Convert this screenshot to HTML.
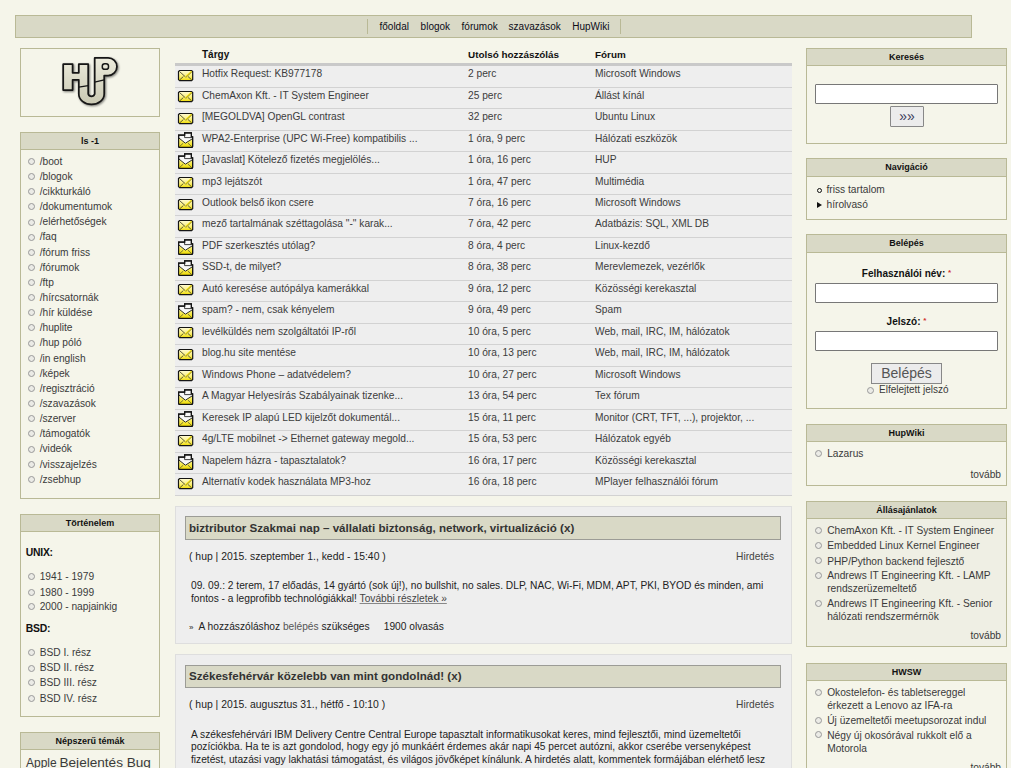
<!DOCTYPE html><html lang="hu"><head><meta charset="utf-8"><title>HUP</title><style>
*{margin:0;padding:0;box-sizing:border-box}
html{background:#fff}
body{width:1011px;height:768px;background:#f5f5ea;position:relative;overflow:hidden;font-family:"Liberation Sans",sans-serif;font-size:10px;color:#333}
.abs{position:absolute}
#nav{left:15px;top:15px;width:957px;height:23px;background:#d9d9c6;border:1px solid #b9b996}
#nav .sep{position:absolute;top:2.6px;width:1px;height:15.4px;background:#b9b996}
#nav span.t{position:absolute;top:5px;color:#0c0c18;font-size:10px;white-space:nowrap}
.blk{position:absolute;border:1px solid #b9b996;background:#f5f5ea}
.blk .hd{height:17px;background:#d9d9c6;border-bottom:1px solid #b9b996;text-align:center;font-weight:bold;font-size:9px;color:#111;line-height:16px}
ul.li{list-style:none}
ul.li li{position:relative;white-space:nowrap;color:#444}
.circ{position:absolute;width:7px;height:7px;border:1px solid #999;border-radius:50%;background:#ebebe6}
table.tr{position:absolute;left:175px;top:45px;width:617px;border-collapse:collapse}
.row{position:absolute;left:175px;width:617px;height:21.47px;background:#eeeeee;border-bottom:1px solid #d2d2d2}
.row span{position:absolute;top:2px;white-space:nowrap;color:#3c3c3c;font-size:10.2px}
.ico{position:absolute;left:3px}
.art{position:absolute;left:175px;width:617px;background:#eeeeee;border:1px solid #dedede}
.art .ttl{position:absolute;left:9px;width:596px;height:23px;background:#d9d9c6;border:1px solid #9c9c96;font-weight:bold;font-size:11.6px;color:#333;padding-left:3px;line-height:20px;white-space:nowrap}
.art .meta{position:absolute;left:13px;font-size:10.4px;color:#222;white-space:nowrap}
.art .hird{position:absolute;right:17px;font-size:10.2px;color:#444}
.art .body{position:absolute;left:15px;width:585px;font-size:10.2px;line-height:12.8px;color:#222}
.art .foot{position:absolute;left:13px;font-size:10.2px;color:#222;white-space:nowrap}
input.tx{position:absolute;left:8px;width:183px;height:20px;background:#fff;border:1px solid #777;border-radius:1px}
</style></head><body><div id="nav" class="abs">
<div class="sep" style="left:350.5px"></div><div class="sep" style="left:603.5px"></div>
<span class="t" style="left:363.5px">főoldal</span>
<span class="t" style="left:404.6px">blogok</span>
<span class="t" style="left:445.6px">fórumok</span>
<span class="t" style="left:492.6px">szavazások</span>
<span class="t" style="left:556.2px">HupWiki</span>
</div>
<div class="blk" style="left:20px;top:48px;width:140px;height:69px">
<svg style="position:absolute;left:34px;top:1px" width="70" height="60" viewBox="0 0 70 60">
<defs><linearGradient id="lg" x1="0" y1="0" x2="0" y2="1"><stop offset="0" stop-color="#ecebdc"/><stop offset="1" stop-color="#c9c8b2"/></linearGradient>
<filter id="sh" x="-20%" y="-20%" width="140%" height="140%"><feGaussianBlur in="SourceAlpha" stdDeviation="1"/><feOffset dx="0.5" dy="0.5"/><feComponentTransfer><feFuncA type="linear" slope="0.5"/></feComponentTransfer><feMerge><feMergeNode/><feMergeNode in="SourceGraphic"/></feMerge></filter></defs>
<g filter="url(#sh)" transform="translate(0.4,0.5)">
<path d="M7.8 13.7H17.2V22.3H23.4V13.7H32.8V43.4A3.4 3.4 0 0 0 39.3 43.4V7.4H52.7A8.8 8.8 0 0 1 52.7 25H48.8V43.4A12.7 10.5 0 0 1 23.4 43.4V29.3H17.2V39.5H7.8Z" fill="url(#lg)" stroke="#161616" stroke-width="1.75" stroke-linejoin="round"/>
<rect x="46.9" y="13.2" width="6.2" height="5.6" rx="2.4" fill="#e6e5d6" stroke="#161616" stroke-width="1.5"/>
<path d="M23.4 36.7L32.8 35.2M39.3 31.6L48.8 29.3" stroke="#161616" stroke-width="1.2"/>
</g></svg>
</div>
<div class="blk" style="left:20px;top:132px;width:140px;height:367px"><div class="hd">ls -1</div>
<div class="circ" style="left:7px;top:24.95px"></div><span class="abs" style="left:18.7px;top:22.75px;font-size:10.2px;color:#3a3a3a;white-space:nowrap">/boot</span>
<div class="circ" style="left:7px;top:40.09px"></div><span class="abs" style="left:18.7px;top:37.89px;font-size:10.2px;color:#3a3a3a;white-space:nowrap">/blogok</span>
<div class="circ" style="left:7px;top:55.23px"></div><span class="abs" style="left:18.7px;top:53.03px;font-size:10.2px;color:#3a3a3a;white-space:nowrap">/cikkturkáló</span>
<div class="circ" style="left:7px;top:70.37px"></div><span class="abs" style="left:18.7px;top:68.17px;font-size:10.2px;color:#3a3a3a;white-space:nowrap">/dokumentumok</span>
<div class="circ" style="left:7px;top:85.51px"></div><span class="abs" style="left:18.7px;top:83.31px;font-size:10.2px;color:#3a3a3a;white-space:nowrap">/elérhetőségek</span>
<div class="circ" style="left:7px;top:100.65px"></div><span class="abs" style="left:18.7px;top:98.45px;font-size:10.2px;color:#3a3a3a;white-space:nowrap">/faq</span>
<div class="circ" style="left:7px;top:115.79px"></div><span class="abs" style="left:18.7px;top:113.59px;font-size:10.2px;color:#3a3a3a;white-space:nowrap">/fórum friss</span>
<div class="circ" style="left:7px;top:130.93px"></div><span class="abs" style="left:18.7px;top:128.73px;font-size:10.2px;color:#3a3a3a;white-space:nowrap">/fórumok</span>
<div class="circ" style="left:7px;top:146.07px"></div><span class="abs" style="left:18.7px;top:143.87px;font-size:10.2px;color:#3a3a3a;white-space:nowrap">/ftp</span>
<div class="circ" style="left:7px;top:161.21px"></div><span class="abs" style="left:18.7px;top:159.01px;font-size:10.2px;color:#3a3a3a;white-space:nowrap">/hírcsatornák</span>
<div class="circ" style="left:7px;top:176.35px"></div><span class="abs" style="left:18.7px;top:174.15px;font-size:10.2px;color:#3a3a3a;white-space:nowrap">/hír küldése</span>
<div class="circ" style="left:7px;top:191.49px"></div><span class="abs" style="left:18.7px;top:189.29px;font-size:10.2px;color:#3a3a3a;white-space:nowrap">/huplite</span>
<div class="circ" style="left:7px;top:206.63px"></div><span class="abs" style="left:18.7px;top:204.43px;font-size:10.2px;color:#3a3a3a;white-space:nowrap">/hup póló</span>
<div class="circ" style="left:7px;top:221.77px"></div><span class="abs" style="left:18.7px;top:219.57px;font-size:10.2px;color:#3a3a3a;white-space:nowrap">/in english</span>
<div class="circ" style="left:7px;top:236.91px"></div><span class="abs" style="left:18.7px;top:234.71px;font-size:10.2px;color:#3a3a3a;white-space:nowrap">/képek</span>
<div class="circ" style="left:7px;top:252.05px"></div><span class="abs" style="left:18.7px;top:249.85px;font-size:10.2px;color:#3a3a3a;white-space:nowrap">/regisztráció</span>
<div class="circ" style="left:7px;top:267.19px"></div><span class="abs" style="left:18.7px;top:264.99px;font-size:10.2px;color:#3a3a3a;white-space:nowrap">/szavazások</span>
<div class="circ" style="left:7px;top:282.33px"></div><span class="abs" style="left:18.7px;top:280.13px;font-size:10.2px;color:#3a3a3a;white-space:nowrap">/szerver</span>
<div class="circ" style="left:7px;top:297.47px"></div><span class="abs" style="left:18.7px;top:295.27px;font-size:10.2px;color:#3a3a3a;white-space:nowrap">/támogatók</span>
<div class="circ" style="left:7px;top:312.61px"></div><span class="abs" style="left:18.7px;top:310.41px;font-size:10.2px;color:#3a3a3a;white-space:nowrap">/videók</span>
<div class="circ" style="left:7px;top:327.75px"></div><span class="abs" style="left:18.7px;top:325.55px;font-size:10.2px;color:#3a3a3a;white-space:nowrap">/visszajelzés</span>
<div class="circ" style="left:7px;top:342.89px"></div><span class="abs" style="left:18.7px;top:340.69px;font-size:10.2px;color:#3a3a3a;white-space:nowrap">/zsebhup</span>
</div>
<div class="blk" style="left:20px;top:514px;width:140px;height:203px"><div class="hd">Történelem</div>
<span class="abs" style="left:4.8px;top:32.10px;font-size:10.4px;letter-spacing:-0.25px;font-weight:bold;color:#111">UNIX:</span>
<div class="circ" style="left:7px;top:58.30px"></div><span class="abs" style="left:18.7px;top:56.10px;font-size:10.2px;color:#3a3a3a;white-space:nowrap">1941 - 1979</span>
<div class="circ" style="left:7px;top:73.80px"></div><span class="abs" style="left:18.7px;top:71.60px;font-size:10.2px;color:#3a3a3a;white-space:nowrap">1980 - 1999</span>
<div class="circ" style="left:7px;top:88.30px"></div><span class="abs" style="left:18.7px;top:86.10px;font-size:10.2px;color:#3a3a3a;white-space:nowrap">2000 - napjainkig</span>
<span class="abs" style="left:4.8px;top:108.10px;font-size:10.4px;letter-spacing:-0.25px;font-weight:bold;color:#111">BSD:</span>
<div class="circ" style="left:7px;top:134.00px"></div><span class="abs" style="left:18.7px;top:131.80px;font-size:10.2px;color:#3a3a3a;white-space:nowrap">BSD I. rész</span>
<div class="circ" style="left:7px;top:149.50px"></div><span class="abs" style="left:18.7px;top:147.30px;font-size:10.2px;color:#3a3a3a;white-space:nowrap">BSD II. rész</span>
<div class="circ" style="left:7px;top:164.20px"></div><span class="abs" style="left:18.7px;top:162.00px;font-size:10.2px;color:#3a3a3a;white-space:nowrap">BSD III. rész</span>
<div class="circ" style="left:7px;top:180.00px"></div><span class="abs" style="left:18.7px;top:177.80px;font-size:10.2px;color:#3a3a3a;white-space:nowrap">BSD IV. rész</span>
</div>
<div class="blk" style="left:20px;top:732px;width:140px;height:60px"><div class="hd">Népszerű témák</div>
<span class="abs" style="left:5px;top:21.5px;white-space:nowrap;color:#3a3a3a"><span style="font-size:12px">Apple</span> <span style="font-size:13.6px">Bejelentés Bug</span></span>
</div>
<span class="abs" style="left:202px;top:49px;font-weight:bold;font-size:10px;color:#111">Tárgy</span>
<span class="abs" style="left:468px;top:49px;font-weight:bold;font-size:9.9px;color:#111">Utolsó hozzászólás</span>
<span class="abs" style="left:595px;top:49px;font-weight:bold;font-size:9.9px;color:#111">Fórum</span>
<div class="abs" style="left:175px;top:63px;width:617px;height:3px;background:#c9c9c9"></div>
<svg width="0" height="0" style="position:absolute"><defs><linearGradient id="gy" x1="0" y1="0" x2="0" y2="1"><stop offset="0" stop-color="#fffbd8"/><stop offset="0.55" stop-color="#fbf07a"/><stop offset="1" stop-color="#f0dc00"/></linearGradient><linearGradient id="gy2" x1="0" y1="0" x2="0" y2="1"><stop offset="0" stop-color="#fbf6a0"/><stop offset="1" stop-color="#f0dc00"/></linearGradient></defs></svg>
<div class="row" style="top:66.20px"><svg class="ico" style="top:2.6px;left:2px" width="17" height="14" viewBox="0 0 17 14"><path d="M2.6 1.5H14.6L15.7 2.6V10.6L14.6 11.7H2.6L1.5 10.6V2.6Z" fill="url(#gy)" stroke="#141414" stroke-width="1.2"/><path d="M2.6 2.6L8.6 8" stroke="#4a4a30" stroke-width="0.9"/><path d="M8.6 8L14.6 2.4" stroke="#f2df10" stroke-width="1.5"/><path d="M8.9 8.4L14.8 3" stroke="#4a4a30" stroke-width="0.5"/><path d="M2.8 10.8L6.4 7.5M14.6 10.8L11 7.5" stroke="#4a4a30" stroke-width="0.9"/></svg><span style="left:27px">Hotfix Request: KB977178</span><span style="left:293px">2 perc</span><span style="left:420px">Microsoft Windows</span></div>
<div class="row" style="top:87.67px"><svg class="ico" style="top:2.6px;left:2px" width="17" height="14" viewBox="0 0 17 14"><path d="M2.6 1.5H14.6L15.7 2.6V10.6L14.6 11.7H2.6L1.5 10.6V2.6Z" fill="url(#gy)" stroke="#141414" stroke-width="1.2"/><path d="M2.6 2.6L8.6 8" stroke="#4a4a30" stroke-width="0.9"/><path d="M8.6 8L14.6 2.4" stroke="#f2df10" stroke-width="1.5"/><path d="M8.9 8.4L14.8 3" stroke="#4a4a30" stroke-width="0.5"/><path d="M2.8 10.8L6.4 7.5M14.6 10.8L11 7.5" stroke="#4a4a30" stroke-width="0.9"/></svg><span style="left:27px">ChemAxon Kft. - IT System Engineer</span><span style="left:293px">25 perc</span><span style="left:420px">Állást kínál</span></div>
<div class="row" style="top:109.14px"><svg class="ico" style="top:2.6px;left:2px" width="17" height="14" viewBox="0 0 17 14"><path d="M2.6 1.5H14.6L15.7 2.6V10.6L14.6 11.7H2.6L1.5 10.6V2.6Z" fill="url(#gy)" stroke="#141414" stroke-width="1.2"/><path d="M2.6 2.6L8.6 8" stroke="#4a4a30" stroke-width="0.9"/><path d="M8.6 8L14.6 2.4" stroke="#f2df10" stroke-width="1.5"/><path d="M8.9 8.4L14.8 3" stroke="#4a4a30" stroke-width="0.5"/><path d="M2.8 10.8L6.4 7.5M14.6 10.8L11 7.5" stroke="#4a4a30" stroke-width="0.9"/></svg><span style="left:27px">[MEGOLDVA] OpenGL contrast</span><span style="left:293px">32 perc</span><span style="left:420px">Ubuntu Linux</span></div>
<div class="row" style="top:130.61px"><svg class="ico" style="top:1px;left:2px" width="18" height="17" viewBox="0 0 18 17"><path d="M1.6 3.2H7.6V0.9H14.4V4.9H15.6V14.6Q15.6 15.4 14.8 15.4H2.4Q1.6 15.4 1.6 14.6Z" fill="#f8f8f8" stroke="#141414" stroke-width="1.2"/><path d="M7.6 0.9V5.6H14.4" fill="none" stroke="#2a2a2a" stroke-width="0.9"/><path d="M1.9 6L8.4 11.2L15.3 6.8V15H1.9Z" fill="url(#gy2)"/><path d="M1.9 6L8.4 11.2L15.3 6.8" fill="none" stroke="#30302a" stroke-width="1"/><path d="M2.3 14.8L6.2 11.2M14.9 14.8L11 11.2" stroke="#55553a" stroke-width="0.8"/><path d="M1.6 3.2H7.6V0.9H14.4V4.9H15.6V14.6Q15.6 15.4 14.8 15.4H2.4Q1.6 15.4 1.6 14.6Z" fill="none" stroke="#141414" stroke-width="1.2"/></svg><span style="left:27px">WPA2-Enterprise (UPC Wi-Free) kompatibilis ...</span><span style="left:293px">1 óra, 9 perc</span><span style="left:420px">Hálózati eszközök</span></div>
<div class="row" style="top:152.08px"><svg class="ico" style="top:1px;left:2px" width="18" height="17" viewBox="0 0 18 17"><path d="M1.6 3.2H7.6V0.9H14.4V4.9H15.6V14.6Q15.6 15.4 14.8 15.4H2.4Q1.6 15.4 1.6 14.6Z" fill="#f8f8f8" stroke="#141414" stroke-width="1.2"/><path d="M7.6 0.9V5.6H14.4" fill="none" stroke="#2a2a2a" stroke-width="0.9"/><path d="M1.9 6L8.4 11.2L15.3 6.8V15H1.9Z" fill="url(#gy2)"/><path d="M1.9 6L8.4 11.2L15.3 6.8" fill="none" stroke="#30302a" stroke-width="1"/><path d="M2.3 14.8L6.2 11.2M14.9 14.8L11 11.2" stroke="#55553a" stroke-width="0.8"/><path d="M1.6 3.2H7.6V0.9H14.4V4.9H15.6V14.6Q15.6 15.4 14.8 15.4H2.4Q1.6 15.4 1.6 14.6Z" fill="none" stroke="#141414" stroke-width="1.2"/></svg><span style="left:27px">[Javaslat] Kötelező fizetés megjelölés...</span><span style="left:293px">1 óra, 16 perc</span><span style="left:420px">HUP</span></div>
<div class="row" style="top:173.55px"><svg class="ico" style="top:2.6px;left:2px" width="17" height="14" viewBox="0 0 17 14"><path d="M2.6 1.5H14.6L15.7 2.6V10.6L14.6 11.7H2.6L1.5 10.6V2.6Z" fill="url(#gy)" stroke="#141414" stroke-width="1.2"/><path d="M2.6 2.6L8.6 8" stroke="#4a4a30" stroke-width="0.9"/><path d="M8.6 8L14.6 2.4" stroke="#f2df10" stroke-width="1.5"/><path d="M8.9 8.4L14.8 3" stroke="#4a4a30" stroke-width="0.5"/><path d="M2.8 10.8L6.4 7.5M14.6 10.8L11 7.5" stroke="#4a4a30" stroke-width="0.9"/></svg><span style="left:27px">mp3 lejátszót</span><span style="left:293px">1 óra, 47 perc</span><span style="left:420px">Multimédia</span></div>
<div class="row" style="top:195.02px"><svg class="ico" style="top:2.6px;left:2px" width="17" height="14" viewBox="0 0 17 14"><path d="M2.6 1.5H14.6L15.7 2.6V10.6L14.6 11.7H2.6L1.5 10.6V2.6Z" fill="url(#gy)" stroke="#141414" stroke-width="1.2"/><path d="M2.6 2.6L8.6 8" stroke="#4a4a30" stroke-width="0.9"/><path d="M8.6 8L14.6 2.4" stroke="#f2df10" stroke-width="1.5"/><path d="M8.9 8.4L14.8 3" stroke="#4a4a30" stroke-width="0.5"/><path d="M2.8 10.8L6.4 7.5M14.6 10.8L11 7.5" stroke="#4a4a30" stroke-width="0.9"/></svg><span style="left:27px">Outlook belső ikon csere</span><span style="left:293px">7 óra, 16 perc</span><span style="left:420px">Microsoft Windows</span></div>
<div class="row" style="top:216.49px"><svg class="ico" style="top:2.6px;left:2px" width="17" height="14" viewBox="0 0 17 14"><path d="M2.6 1.5H14.6L15.7 2.6V10.6L14.6 11.7H2.6L1.5 10.6V2.6Z" fill="url(#gy)" stroke="#141414" stroke-width="1.2"/><path d="M2.6 2.6L8.6 8" stroke="#4a4a30" stroke-width="0.9"/><path d="M8.6 8L14.6 2.4" stroke="#f2df10" stroke-width="1.5"/><path d="M8.9 8.4L14.8 3" stroke="#4a4a30" stroke-width="0.5"/><path d="M2.8 10.8L6.4 7.5M14.6 10.8L11 7.5" stroke="#4a4a30" stroke-width="0.9"/></svg><span style="left:27px">mező tartalmának széttagolása &quot;-&quot; karak...</span><span style="left:293px">7 óra, 42 perc</span><span style="left:420px">Adatbázis: SQL, XML DB</span></div>
<div class="row" style="top:237.96px"><svg class="ico" style="top:1px;left:2px" width="18" height="17" viewBox="0 0 18 17"><path d="M1.6 3.2H7.6V0.9H14.4V4.9H15.6V14.6Q15.6 15.4 14.8 15.4H2.4Q1.6 15.4 1.6 14.6Z" fill="#f8f8f8" stroke="#141414" stroke-width="1.2"/><path d="M7.6 0.9V5.6H14.4" fill="none" stroke="#2a2a2a" stroke-width="0.9"/><path d="M1.9 6L8.4 11.2L15.3 6.8V15H1.9Z" fill="url(#gy2)"/><path d="M1.9 6L8.4 11.2L15.3 6.8" fill="none" stroke="#30302a" stroke-width="1"/><path d="M2.3 14.8L6.2 11.2M14.9 14.8L11 11.2" stroke="#55553a" stroke-width="0.8"/><path d="M1.6 3.2H7.6V0.9H14.4V4.9H15.6V14.6Q15.6 15.4 14.8 15.4H2.4Q1.6 15.4 1.6 14.6Z" fill="none" stroke="#141414" stroke-width="1.2"/></svg><span style="left:27px">PDF szerkesztés utólag?</span><span style="left:293px">8 óra, 4 perc</span><span style="left:420px">Linux-kezdő</span></div>
<div class="row" style="top:259.43px"><svg class="ico" style="top:1px;left:2px" width="18" height="17" viewBox="0 0 18 17"><path d="M1.6 3.2H7.6V0.9H14.4V4.9H15.6V14.6Q15.6 15.4 14.8 15.4H2.4Q1.6 15.4 1.6 14.6Z" fill="#f8f8f8" stroke="#141414" stroke-width="1.2"/><path d="M7.6 0.9V5.6H14.4" fill="none" stroke="#2a2a2a" stroke-width="0.9"/><path d="M1.9 6L8.4 11.2L15.3 6.8V15H1.9Z" fill="url(#gy2)"/><path d="M1.9 6L8.4 11.2L15.3 6.8" fill="none" stroke="#30302a" stroke-width="1"/><path d="M2.3 14.8L6.2 11.2M14.9 14.8L11 11.2" stroke="#55553a" stroke-width="0.8"/><path d="M1.6 3.2H7.6V0.9H14.4V4.9H15.6V14.6Q15.6 15.4 14.8 15.4H2.4Q1.6 15.4 1.6 14.6Z" fill="none" stroke="#141414" stroke-width="1.2"/></svg><span style="left:27px">SSD-t, de milyet?</span><span style="left:293px">8 óra, 38 perc</span><span style="left:420px">Merevlemezek, vezérlők</span></div>
<div class="row" style="top:280.90px"><svg class="ico" style="top:2.6px;left:2px" width="17" height="14" viewBox="0 0 17 14"><path d="M2.6 1.5H14.6L15.7 2.6V10.6L14.6 11.7H2.6L1.5 10.6V2.6Z" fill="url(#gy)" stroke="#141414" stroke-width="1.2"/><path d="M2.6 2.6L8.6 8" stroke="#4a4a30" stroke-width="0.9"/><path d="M8.6 8L14.6 2.4" stroke="#f2df10" stroke-width="1.5"/><path d="M8.9 8.4L14.8 3" stroke="#4a4a30" stroke-width="0.5"/><path d="M2.8 10.8L6.4 7.5M14.6 10.8L11 7.5" stroke="#4a4a30" stroke-width="0.9"/></svg><span style="left:27px">Autó keresése autópálya kamerákkal</span><span style="left:293px">9 óra, 12 perc</span><span style="left:420px">Közösségi kerekasztal</span></div>
<div class="row" style="top:302.37px"><svg class="ico" style="top:1px;left:2px" width="18" height="17" viewBox="0 0 18 17"><path d="M1.6 3.2H7.6V0.9H14.4V4.9H15.6V14.6Q15.6 15.4 14.8 15.4H2.4Q1.6 15.4 1.6 14.6Z" fill="#f8f8f8" stroke="#141414" stroke-width="1.2"/><path d="M7.6 0.9V5.6H14.4" fill="none" stroke="#2a2a2a" stroke-width="0.9"/><path d="M1.9 6L8.4 11.2L15.3 6.8V15H1.9Z" fill="url(#gy2)"/><path d="M1.9 6L8.4 11.2L15.3 6.8" fill="none" stroke="#30302a" stroke-width="1"/><path d="M2.3 14.8L6.2 11.2M14.9 14.8L11 11.2" stroke="#55553a" stroke-width="0.8"/><path d="M1.6 3.2H7.6V0.9H14.4V4.9H15.6V14.6Q15.6 15.4 14.8 15.4H2.4Q1.6 15.4 1.6 14.6Z" fill="none" stroke="#141414" stroke-width="1.2"/></svg><span style="left:27px">spam? - nem, csak kényelem</span><span style="left:293px">9 óra, 49 perc</span><span style="left:420px">Spam</span></div>
<div class="row" style="top:323.84px"><svg class="ico" style="top:2.6px;left:2px" width="17" height="14" viewBox="0 0 17 14"><path d="M2.6 1.5H14.6L15.7 2.6V10.6L14.6 11.7H2.6L1.5 10.6V2.6Z" fill="url(#gy)" stroke="#141414" stroke-width="1.2"/><path d="M2.6 2.6L8.6 8" stroke="#4a4a30" stroke-width="0.9"/><path d="M8.6 8L14.6 2.4" stroke="#f2df10" stroke-width="1.5"/><path d="M8.9 8.4L14.8 3" stroke="#4a4a30" stroke-width="0.5"/><path d="M2.8 10.8L6.4 7.5M14.6 10.8L11 7.5" stroke="#4a4a30" stroke-width="0.9"/></svg><span style="left:27px">levélküldés nem szolgáltatói IP-ről</span><span style="left:293px">10 óra, 5 perc</span><span style="left:420px">Web, mail, IRC, IM, hálózatok</span></div>
<div class="row" style="top:345.31px"><svg class="ico" style="top:2.6px;left:2px" width="17" height="14" viewBox="0 0 17 14"><path d="M2.6 1.5H14.6L15.7 2.6V10.6L14.6 11.7H2.6L1.5 10.6V2.6Z" fill="url(#gy)" stroke="#141414" stroke-width="1.2"/><path d="M2.6 2.6L8.6 8" stroke="#4a4a30" stroke-width="0.9"/><path d="M8.6 8L14.6 2.4" stroke="#f2df10" stroke-width="1.5"/><path d="M8.9 8.4L14.8 3" stroke="#4a4a30" stroke-width="0.5"/><path d="M2.8 10.8L6.4 7.5M14.6 10.8L11 7.5" stroke="#4a4a30" stroke-width="0.9"/></svg><span style="left:27px">blog.hu site mentése</span><span style="left:293px">10 óra, 13 perc</span><span style="left:420px">Web, mail, IRC, IM, hálózatok</span></div>
<div class="row" style="top:366.78px"><svg class="ico" style="top:2.6px;left:2px" width="17" height="14" viewBox="0 0 17 14"><path d="M2.6 1.5H14.6L15.7 2.6V10.6L14.6 11.7H2.6L1.5 10.6V2.6Z" fill="url(#gy)" stroke="#141414" stroke-width="1.2"/><path d="M2.6 2.6L8.6 8" stroke="#4a4a30" stroke-width="0.9"/><path d="M8.6 8L14.6 2.4" stroke="#f2df10" stroke-width="1.5"/><path d="M8.9 8.4L14.8 3" stroke="#4a4a30" stroke-width="0.5"/><path d="M2.8 10.8L6.4 7.5M14.6 10.8L11 7.5" stroke="#4a4a30" stroke-width="0.9"/></svg><span style="left:27px">Windows Phone – adatvédelem?</span><span style="left:293px">10 óra, 27 perc</span><span style="left:420px">Microsoft Windows</span></div>
<div class="row" style="top:388.25px"><svg class="ico" style="top:1px;left:2px" width="18" height="17" viewBox="0 0 18 17"><path d="M1.6 3.2H7.6V0.9H14.4V4.9H15.6V14.6Q15.6 15.4 14.8 15.4H2.4Q1.6 15.4 1.6 14.6Z" fill="#f8f8f8" stroke="#141414" stroke-width="1.2"/><path d="M7.6 0.9V5.6H14.4" fill="none" stroke="#2a2a2a" stroke-width="0.9"/><path d="M1.9 6L8.4 11.2L15.3 6.8V15H1.9Z" fill="url(#gy2)"/><path d="M1.9 6L8.4 11.2L15.3 6.8" fill="none" stroke="#30302a" stroke-width="1"/><path d="M2.3 14.8L6.2 11.2M14.9 14.8L11 11.2" stroke="#55553a" stroke-width="0.8"/><path d="M1.6 3.2H7.6V0.9H14.4V4.9H15.6V14.6Q15.6 15.4 14.8 15.4H2.4Q1.6 15.4 1.6 14.6Z" fill="none" stroke="#141414" stroke-width="1.2"/></svg><span style="left:27px">A Magyar Helyesírás Szabályainak tizenke...</span><span style="left:293px">13 óra, 54 perc</span><span style="left:420px">Tex fórum</span></div>
<div class="row" style="top:409.72px"><svg class="ico" style="top:1px;left:2px" width="18" height="17" viewBox="0 0 18 17"><path d="M1.6 3.2H7.6V0.9H14.4V4.9H15.6V14.6Q15.6 15.4 14.8 15.4H2.4Q1.6 15.4 1.6 14.6Z" fill="#f8f8f8" stroke="#141414" stroke-width="1.2"/><path d="M7.6 0.9V5.6H14.4" fill="none" stroke="#2a2a2a" stroke-width="0.9"/><path d="M1.9 6L8.4 11.2L15.3 6.8V15H1.9Z" fill="url(#gy2)"/><path d="M1.9 6L8.4 11.2L15.3 6.8" fill="none" stroke="#30302a" stroke-width="1"/><path d="M2.3 14.8L6.2 11.2M14.9 14.8L11 11.2" stroke="#55553a" stroke-width="0.8"/><path d="M1.6 3.2H7.6V0.9H14.4V4.9H15.6V14.6Q15.6 15.4 14.8 15.4H2.4Q1.6 15.4 1.6 14.6Z" fill="none" stroke="#141414" stroke-width="1.2"/></svg><span style="left:27px">Keresek IP alapú LED kijelzőt dokumentál...</span><span style="left:293px">15 óra, 11 perc</span><span style="left:420px">Monitor (CRT, TFT, ...), projektor, ...</span></div>
<div class="row" style="top:431.19px"><svg class="ico" style="top:2.6px;left:2px" width="17" height="14" viewBox="0 0 17 14"><path d="M2.6 1.5H14.6L15.7 2.6V10.6L14.6 11.7H2.6L1.5 10.6V2.6Z" fill="url(#gy)" stroke="#141414" stroke-width="1.2"/><path d="M2.6 2.6L8.6 8" stroke="#4a4a30" stroke-width="0.9"/><path d="M8.6 8L14.6 2.4" stroke="#f2df10" stroke-width="1.5"/><path d="M8.9 8.4L14.8 3" stroke="#4a4a30" stroke-width="0.5"/><path d="M2.8 10.8L6.4 7.5M14.6 10.8L11 7.5" stroke="#4a4a30" stroke-width="0.9"/></svg><span style="left:27px">4g/LTE mobilnet -&gt; Ethernet gateway megold...</span><span style="left:293px">15 óra, 53 perc</span><span style="left:420px">Hálózatok egyéb</span></div>
<div class="row" style="top:452.66px"><svg class="ico" style="top:1px;left:2px" width="18" height="17" viewBox="0 0 18 17"><path d="M1.6 3.2H7.6V0.9H14.4V4.9H15.6V14.6Q15.6 15.4 14.8 15.4H2.4Q1.6 15.4 1.6 14.6Z" fill="#f8f8f8" stroke="#141414" stroke-width="1.2"/><path d="M7.6 0.9V5.6H14.4" fill="none" stroke="#2a2a2a" stroke-width="0.9"/><path d="M1.9 6L8.4 11.2L15.3 6.8V15H1.9Z" fill="url(#gy2)"/><path d="M1.9 6L8.4 11.2L15.3 6.8" fill="none" stroke="#30302a" stroke-width="1"/><path d="M2.3 14.8L6.2 11.2M14.9 14.8L11 11.2" stroke="#55553a" stroke-width="0.8"/><path d="M1.6 3.2H7.6V0.9H14.4V4.9H15.6V14.6Q15.6 15.4 14.8 15.4H2.4Q1.6 15.4 1.6 14.6Z" fill="none" stroke="#141414" stroke-width="1.2"/></svg><span style="left:27px">Napelem házra - tapasztalatok?</span><span style="left:293px">16 óra, 17 perc</span><span style="left:420px">Közösségi kerekasztal</span></div>
<div class="row" style="top:474.13px"><svg class="ico" style="top:2.6px;left:2px" width="17" height="14" viewBox="0 0 17 14"><path d="M2.6 1.5H14.6L15.7 2.6V10.6L14.6 11.7H2.6L1.5 10.6V2.6Z" fill="url(#gy)" stroke="#141414" stroke-width="1.2"/><path d="M2.6 2.6L8.6 8" stroke="#4a4a30" stroke-width="0.9"/><path d="M8.6 8L14.6 2.4" stroke="#f2df10" stroke-width="1.5"/><path d="M8.9 8.4L14.8 3" stroke="#4a4a30" stroke-width="0.5"/><path d="M2.8 10.8L6.4 7.5M14.6 10.8L11 7.5" stroke="#4a4a30" stroke-width="0.9"/></svg><span style="left:27px">Alternatív kodek használata MP3-hoz</span><span style="left:293px">16 óra, 18 perc</span><span style="left:420px">MPlayer felhasználói fórum</span></div>
<div class="art" style="top:506px;height:138px">
<div class="ttl" style="top:9px;height:24px;line-height:21px">biztributor Szakmai nap – vállalati biztonság, network, virtualizáció (x)</div>
<span class="meta" style="top:44px">( hup | 2015. szeptember 1., kedd - 15:40 )</span>
<span class="hird" style="top:44px">Hirdetés</span>
<div class="body" style="top:73px">09. 09.: 2 terem, 17 előadás, 14 gyártó (sok új!), no bullshit, no sales. DLP, NAC, Wi-Fi, MDM, APT, PKI, BYOD és minden, ami fontos - a legprofibb technológiákkal! <span style="color:#444;text-decoration:underline;text-decoration-color:#888">További részletek »</span></div>
<span class="foot" style="top:114px"><span style="font-size:8px;vertical-align:0px">»</span>&nbsp; A hozzászóláshoz <span style="color:#555">belépés</span> szükséges &nbsp;&nbsp;&nbsp;&nbsp;1900 olvasás</span>
</div>
<div class="art" style="top:654px;height:130px">
<div class="ttl" style="top:10px">Székesfehérvár közelebb van mint gondolnád! (x)</div>
<span class="meta" style="top:44px">( hup | 2015. augusztus 31., hétfő - 10:10 )</span>
<span class="hird" style="top:44px">Hirdetés</span>
<div class="body" style="top:73.5px">A székesfehérvári IBM Delivery Centre Central Europe tapasztalt informatikusokat keres, mind fejlesztői, mind üzemeltetői pozíciókba. Ha te is azt gondolod, hogy egy jó munkáért érdemes akár napi 45 percet autózni, akkor cserébe versenyképest fizetést, utazási vagy lakhatási támogatást, és világos jövőképet kínálunk. A hirdetés alatt, kommentek formájában elérhető lesz</div>
</div>
<div class="blk" style="left:806px;top:48px;width:201px;height:96px"><div class="hd" style="height:17px">Keresés</div><input class="tx" style="top:35.3px"><div class="abs" style="left:83px;top:57px;width:34px;height:21px;background:#ececec;border:1px solid #888;border-radius:1px;text-align:center;font-size:14px;line-height:18px;color:#3a3a5a">»»</div></div>
<div class="blk" style="left:806px;top:158px;width:201px;height:62px"><div class="hd" style="height:18px">Navigáció</div><div class="abs" style="left:9.5px;top:28.5px;width:5.5px;height:5.5px;border:1.6px solid #111;border-radius:50%"></div><span class="abs" style="left:19.5px;top:25.3px;color:#3a3a3a;font-size:10.2px">friss tartalom</span><div class="abs" style="left:9.6px;top:42.5px;width:0;height:0;border-left:5px solid #111;border-top:3.5px solid transparent;border-bottom:3.5px solid transparent"></div><span class="abs" style="left:19.5px;top:39.5px;color:#3a3a3a;font-size:10.2px">hírolvasó</span></div>
<div class="blk" style="left:806px;top:234px;width:201px;height:175px"><div class="hd" style="height:18px">Belépés</div><div class="abs" style="left:0;top:33.3px;width:199px;text-align:center;font-weight:bold;font-size:10px;color:#111">Felhasználói név: <span style="color:#d03030;font-size:8px;vertical-align:2px">*</span></div><input class="tx" style="top:48px"><div class="abs" style="left:0;top:81px;width:199px;text-align:center;font-weight:bold;font-size:10px;color:#111">Jelszó: <span style="color:#d03030;font-size:8px;vertical-align:2px">*</span></div><input class="tx" style="top:96.3px"><div class="abs" style="left:64px;top:128px;width:71px;height:21px;background:#ececec;border:1px solid #888;text-align:center;font-size:14px;line-height:19px;color:#555">Belépés</div><div class="circ" style="left:60px;top:151.5px"></div><span class="abs" style="left:72px;top:149px;color:#3a3a3a;font-size:10px">Elfelejtett jelszó</span></div>
<div class="blk" style="left:806px;top:424px;width:201px;height:62px"><div class="hd" style="height:17px">HupWiki</div><div class="circ" style="left:8px;top:24.70px"></div><span class="abs" style="left:20.2px;top:22.10px;color:#3a3a3a;font-size:10.2px;line-height:13px;white-space:nowrap">Lazarus</span><span class="abs" style="right:5px;top:43.50px;color:#3a3a3a;font-size:10.2px">tovább</span></div>
<div class="blk" style="left:806px;top:501px;width:201px;height:146px;background:#efefe4"><div class="hd" style="height:17px">Állásajánlatok</div><div class="circ" style="left:8px;top:24.90px"></div><span class="abs" style="left:20.2px;top:22.30px;color:#3a3a3a;font-size:10.2px;line-height:13px;white-space:nowrap">ChemAxon Kft. - IT System Engineer</span><div class="circ" style="left:8px;top:39.90px"></div><span class="abs" style="left:20.2px;top:37.30px;color:#3a3a3a;font-size:10.2px;line-height:13px;white-space:nowrap">Embedded Linux Kernel Engineer</span><div class="circ" style="left:8px;top:55.20px"></div><span class="abs" style="left:20.2px;top:52.60px;color:#3a3a3a;font-size:10.2px;line-height:13px;white-space:nowrap">PHP/Python backend fejlesztő</span><div class="circ" style="left:8px;top:69.60px"></div><span class="abs" style="left:20.2px;top:67.00px;color:#3a3a3a;font-size:10.2px;line-height:13px;white-space:nowrap">Andrews IT Engineering Kft. - LAMP<br>rendszerüzemeltető</span><div class="circ" style="left:8px;top:97.70px"></div><span class="abs" style="left:20.2px;top:95.10px;color:#3a3a3a;font-size:10.2px;line-height:13px;white-space:nowrap">Andrews IT Engineering Kft. - Senior<br>hálózati rendszermérnök</span><span class="abs" style="right:5px;top:128.10px;color:#3a3a3a;font-size:10.2px">tovább</span></div>
<div class="blk" style="left:806px;top:663px;width:201px;height:130px"><div class="hd" style="height:17px">HWSW</div><div class="circ" style="left:8px;top:24.60px"></div><span class="abs" style="left:20.2px;top:22.00px;color:#3a3a3a;font-size:10.2px;line-height:13px;white-space:nowrap">Okostelefon- és tabletsereggel<br>érkezett a Lenovo az IFA-ra</span><div class="circ" style="left:8px;top:52.60px"></div><span class="abs" style="left:20.2px;top:50.00px;color:#3a3a3a;font-size:10.2px;line-height:13px;white-space:nowrap">Új üzemeltetői meetupsorozat indul</span><div class="circ" style="left:8px;top:67.30px"></div><span class="abs" style="left:20.2px;top:64.70px;color:#3a3a3a;font-size:10.2px;line-height:13px;white-space:nowrap">Négy új okosórával rukkolt elő a<br>Motorola</span><span class="abs" style="right:5px;top:98.00px;color:#3a3a3a;font-size:10.2px">tovább</span></div></body></html>
